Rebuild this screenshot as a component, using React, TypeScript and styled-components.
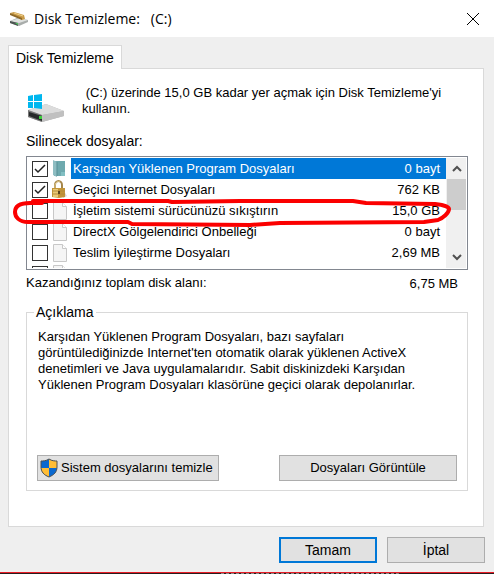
import React, { useState } from 'react';
import styled, { createGlobalStyle, css } from 'styled-components';

const GlobalStyle = createGlobalStyle`
  *, *::before, *::after { box-sizing: border-box; }
  body {
    margin: 0;
    background: #efefef;
    color: #000;
    font: 13px/16px 'Liberation Sans', Arial, sans-serif;
  }
  button, input { font: inherit; color: inherit; margin: 0; }
  svg { display: block; flex: none; }
`;

const Dialog = styled.main`
  display: flex;
  flex-direction: column;
  min-height: 100vh;
  background: #efefef;
`;

const TitleBar = styled.header`
  display: flex;
  align-items: center;
  gap: 6px;
  height: 37px;
  padding: 0 12px 0 9px;
  background: #fff;
`;

const Title = styled.h1`
  flex: 1;
  margin: 0;
  font: 14px/20px 'Open Sans', 'Segoe UI', sans-serif;
  white-space: pre;
`;

const CloseButton = styled.button`
  display: grid;
  place-items: center;
  width: 18px;
  height: 24px;
  padding: 0;
  border: 0;
  background: none;
`;

const Content = styled.div`
  flex: 1;
  display: flex;
  flex-direction: column;
  padding: 8px 10px 9px 8px;
`;

const TabList = styled.div`
  display: flex;
`;

const Tab = styled.button`
  height: 24px;
  margin-bottom: -1px;
  padding: 0 7px;
  border: 1px solid #d9d9d9;
  border-bottom: 0;
  background: #fff;
  font-size: 14px;
  z-index: 1;
`;

const Panel = styled.section`
  flex: 1;
  display: flex;
  flex-direction: column;
  padding: 16px 15px 35px 17px;
  border: 1px solid #d9d9d9;
  background: #fff;
`;

const Intro = styled.div`
  display: flex;
  gap: 17px;
  margin-bottom: 10px;
`;

const DriveIconBox = styled.div`
  flex: none;
  width: 39px;
  padding: 9px 0 0 2px;
`;

const IntroText = styled.p`
  margin: 0;
  white-space: pre-wrap;
`;

const ListLabel = styled.h2`
  margin: 0 0 7px;
  font: inherit;
  font-size: 14px;
`;

const ListFrame = styled.div`
  position: relative;
  display: flex;
  height: 114px;
  padding: 1px;
  border: 1px solid #828790;
`;

const FileList = styled.ul`
  flex: 1;
  margin: 0;
  padding: 0;
  overflow: hidden;
  list-style: none;
`;

const FileRow = styled.label`
  display: grid;
  grid-template-columns: 16px 17px 1fr;
  align-items: center;
  height: 21px;
  padding-left: 4px;
  column-gap: 4px;
`;

const CheckBox = styled.span`
  display: grid;
  width: 16px;
  height: 16px;
  > * { grid-area: 1 / 1; }
`;

const CheckInput = styled.input`
  appearance: none;
  width: 16px;
  height: 16px;
  border: 1px solid #333;
  background: #fff;
`;

const FileText = styled.span<{ $selected?: boolean }>`
  display: flex;
  justify-content: space-between;
  height: 21px;
  margin-left: -2px;
  padding: 3px 6px 0 2px;
  white-space: nowrap;
  ${(p) => p.$selected && css`
    background: #0078d7;
    color: #fff;
  `}
`;

const ScrollBar = styled.div`
  display: flex;
  flex-direction: column;
  width: 20px;
  padding-left: 1px;
  background: #f0f0f0;
`;

const ScrollButton = styled.button`
  display: grid;
  place-items: center;
  height: 21px;
  padding: 0;
  border: 0;
  background: none;
`;

const ScrollThumb = styled.div`
  height: 31px;
  margin-bottom: auto;
  background: #cdcdcd;
`;

const Highlight = styled.svg`
  position: absolute;
  left: -16px;
  top: 38px;
  overflow: visible;
  pointer-events: none;
`;

const Total = styled.div`
  display: flex;
  justify-content: space-between;
  align-items: flex-end;
  height: 22px;
  margin-bottom: 12px;
  padding-right: 10px;
`;

const TotalLabel = styled.span`
  align-self: flex-start;
  padding-top: 5px;
`;

const Group = styled.fieldset`
  flex: 1;
  min-width: 0;
  margin: 0;
  padding: 9px 10px 9px;
  border: 1px solid #d9d9d9;
`;

const Legend = styled.legend`
  margin-left: -3px;
  padding: 0 2px;
  font-size: 14px;
`;

const Description = styled.p`
  max-width: 400px;
  margin: 0 0 62px;
  padding-left: 1px;
`;

const ActionRow = styled.div`
  display: flex;
  justify-content: space-between;
`;

const Footer = styled.footer`
  display: flex;
  justify-content: flex-end;
  gap: 10px;
  padding: 1px 9px 9px;
  font-size: 14px;
`;

const PushButton = styled.button<{ $width: number; $primary?: boolean; $start?: boolean }>`
  display: flex;
  align-items: center;
  justify-content: ${(p) => (p.$start ? 'flex-start' : 'center')};
  gap: 2px;
  width: ${(p) => p.$width}px;
  height: 26px;
  padding: 0 1px;
  border: ${(p) => (p.$primary ? '2px solid #0078d7' : '1px solid #adadad')};
  background: #e1e1e1;
  white-space: nowrap;
`;

const BottomEdge = styled.div`
  height: 2px;
  border-top: 1px solid #e81c26;
  background:
    repeating-linear-gradient(90deg, #8d8585 0 3px, #2a1c1e 3px 5px) 70% 0 / 36% 100% no-repeat,
    #2a1c1e;
`;

const CleanupIcon = () => (
  <svg width="19" height="14" viewBox="0 0 19 14" aria-hidden="true">
    <path d="M1 9 8 6l11 2v2l-9 4-9-3z" fill="#a9adab" />
    <path d="m1 9 9 2 9-3-8-2z" fill="#dfe1df" />
    <path d="m1 9 8 2v3l-8-3z" fill="#4c5552" />
    <path d="M6 11h3v2z" fill="#4dc05a" />
    <path d="m1 1 4-1 10 3 1 4-3 1z" fill="#c99b48" />
    <path d="m1 1 12 5v2L1 3z" fill="#8d6828" />
    <path d="m5 1 9 3" stroke="#efd08b" fill="none" />
  </svg>
);

const DriveIcon = () => (
  <svg width="37" height="29" viewBox="0 0 37 29" aria-hidden="true">
    <path d="M0 16 18 10l18 7v5l-22 6-14-5z" fill="#b4b4b4" />
    <path d="m0 16 18-6 18 7-22 4z" fill="#dcdcdc" />
    <path d="m14 21 22-4v5l-22 6z" fill="#c0c0c0" />
    <path d="m0 16 14 5v7L0 23z" fill="#777" />
    <path d="m1 18 13 4v5L1 22z" fill="#262929" />
    <path d="M11 22h3v3h-3z" fill="#3ccc3c" />
    <path d="m0 2 5-1v6H0zm6-1 8-1v7H6zM0 8h5v6H0zm6 0h8v7l-8-1z" fill="#00b7ef" />
  </svg>
);

const FolderIcon = () => (
  <svg width="16" height="17" viewBox="0 0 16 17" aria-hidden="true">
    <path d="M2 1h11v15H2z" fill="#6ea9ae" />
    <path d="m1 0 4 2v15l-4-2z" fill="#8ebdc2" />
    <path d="M9 12h4v4H9z" fill="#82bfc3" />
    <path d="M5 2v14" stroke="#568f96" fill="none" />
  </svg>
);

const LockIcon = () => (
  <svg width="16" height="19" viewBox="0 0 16 19" aria-hidden="true">
    <path d="M3 9V5a3.500 4 0 0 1 7 0v4" fill="none" stroke="#a5864a" strokeWidth="2" />
    <path d="M3 9V5a3.500 4 0 0 1 5-3" fill="none" stroke="#e4cf93" />
    <path d="m12 11 3 5-4 2z" fill="#d8d8d8" />
    <path d="M0 8h13v9l-6 1-7-1z" fill="#c2953a" />
    <path d="M1 9h5v8H1z" fill="#e9ca78" />
    <path d="M0 11h13M0 14h13" stroke="#b48c3b" />
    <path d="M6 11h2v3H6z" fill="#59431e" />
  </svg>
);

const FileIcon = () => (
  <svg width="16" height="18" viewBox="0 0 16 18" aria-hidden="true">
    <path d="M1.500.5h9l4 4v13h-13z" fill="#f5f5f5" stroke="#c8c8c8" />
    <path d="M10.500.5v4h4" fill="#fff" stroke="#c8c8c8" />
  </svg>
);

const Shield = () => (
  <svg width="20" height="20" viewBox="0 0 20 20" aria-hidden="true">
    <path d="M10 1c3 2 6 2 8 2v6c0 5-3 8-8 10-5-2-8-5-8-10V3c2 0 5 0 8-2z" fill="#0a68cf" />
    <path d="M10 1c3 2 6 2 8 2v7h-8zM2 10h8v9c-5-2-8-5-8-9z" fill="#ffbd35" />
    <path d="M10 1c3 2 6 2 8 2v6c0 5-3 8-8 10-5-2-8-5-8-10V3c2 0 5 0 8-2z" fill="none" stroke="#4c4f52" />
  </svg>
);

const Chevron = ({ down }: { down?: boolean }) => (
  <svg width="10" height="8" viewBox="0 0 10 8" aria-hidden="true">
    <path d={down ? 'm1 1 4 4 4-4' : 'm1 6 4-4 4 4'} fill="none" stroke="#505050" strokeWidth="2" />
  </svg>
);

const files = [
  { name: 'Karşıdan Yüklenen Program Dosyaları', size: '0 bayt', Icon: FolderIcon, checked: true },
  { name: 'Geçici Internet Dosyaları', size: '762 KB', Icon: LockIcon, checked: true },
  { name: 'İşletim sistemi sürücünüzü sıkıştırın', size: '15,0 GB', Icon: FileIcon, checked: false },
  { name: 'DirectX Gölgelendirici Önbelleği', size: '0 bayt', Icon: FileIcon, checked: false },
  { name: 'Teslim İyileştirme Dosyaları', size: '2,69 MB', Icon: FileIcon, checked: false },
  { name: '', size: '', Icon: FileIcon, checked: false },
];

export default function App() {
  const [checks, setChecks] = useState(files.map((f) => f.checked));
  const toggle = (i: number) => setChecks(checks.map((c, n) => (n === i ? !c : c)));

  return (
    <Dialog>
      <GlobalStyle />
      <TitleBar>
        <CleanupIcon />
        <Title>{'Disk Temizleme:   (C:)'}</Title>
        <CloseButton aria-label="Kapat">
          <svg width="14" height="14" viewBox="0 0 14 14">
            <path d="m1 1 12 12M13 1 1 13" stroke="#000" fill="none" />
          </svg>
        </CloseButton>
      </TitleBar>
      <Content>
        <TabList role="tablist">
          <Tab role="tab" aria-selected="true">Disk Temizleme</Tab>
        </TabList>
        <Panel role="tabpanel">
          <Intro>
            <DriveIconBox><DriveIcon /></DriveIconBox>
            <IntroText>{" (C:) üzerinde 15,0 GB kadar yer açmak için Disk Temizleme'yi kullanın."}</IntroText>
          </Intro>
          <ListLabel>Silinecek dosyalar:</ListLabel>
          <ListFrame>
            <FileList>
              {files.map(({ name, size, Icon }, i) => (
                <li key={i}>
                  <FileRow>
                    <CheckBox>
                      <CheckInput
                        type="checkbox"
                        aria-label={name || 'Diğer dosyalar'}
                        checked={checks[i]}
                        onChange={() => toggle(i)}
                      />
                      {checks[i] && (
                        <svg width="16" height="16" viewBox="0 0 16 16" aria-hidden="true">
                          <path d="m3 8 3 3 7-7" fill="none" stroke="#222" strokeWidth="1.500" />
                        </svg>
                      )}
                    </CheckBox>
                    <Icon />
                    <FileText $selected={i === 0}>
                      <span>{name}</span>
                      <span>{size}</span>
                    </FileText>
                  </FileRow>
                </li>
              ))}
            </FileList>
            <ScrollBar>
              <ScrollButton aria-label="Yukarı kaydır"><Chevron /></ScrollButton>
              <ScrollThumb />
              <ScrollButton aria-label="Aşağı kaydır"><Chevron down /></ScrollButton>
            </ScrollBar>
            <Highlight width="412" height="32" viewBox="11 195 412 32" aria-hidden="true">
              <path
                d="M33 201 168 201 172 202 240 201 353 201 366 203 435 204C444 205 449 207 449 209 449 213 443 218 438 220L424 222 280 223 250 225 132 224 128 222 28 222C19 222 15 217 15 212 15 206 20 203 30 203L42 203"
                fill="none"
                stroke="#fb0000"
                strokeWidth="4"
                strokeLinejoin="round"
                strokeLinecap="round"
              />
            </Highlight>
          </ListFrame>
          <Total>
            <TotalLabel>Kazandığınız toplam disk alanı:</TotalLabel>
            <span>6,75 MB</span>
          </Total>
          <Group>
            <Legend>Açıklama</Legend>
            <Description>
              Karşıdan Yüklenen Program Dosyaları, bazı sayfaları görüntülediğinizde Internet'ten
              otomatik olarak yüklenen ActiveX denetimleri ve Java uygulamalarıdır. Sabit
              diskinizdeki Karşıdan Yüklenen Program Dosyaları klasörüne geçici olarak depolanırlar.
            </Description>
            <ActionRow>
              <PushButton $width={182} $start><Shield />Sistem dosyalarını temizle</PushButton>
              <PushButton $width={178}>Dosyaları Görüntüle</PushButton>
            </ActionRow>
          </Group>
        </Panel>
      </Content>
      <Footer>
        <PushButton $width={98} $primary>Tamam</PushButton>
        <PushButton $width={98}>İptal</PushButton>
      </Footer>
      <BottomEdge />
    </Dialog>
  );
}
